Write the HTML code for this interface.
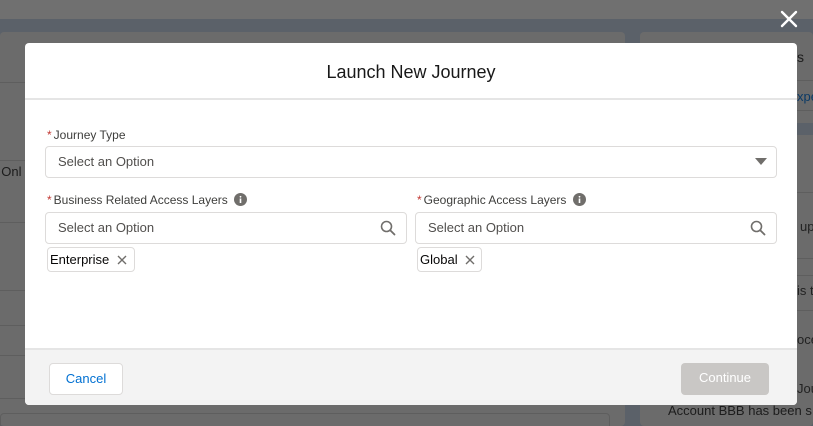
<!DOCTYPE html>
<html style="overflow:hidden;width:813px;height:426px"><head><meta charset="utf-8"><style>
*{box-sizing:border-box;margin:0;padding:0}
body{width:813px;height:426px;overflow:hidden;position:relative;background:#5b6169;font-family:"Liberation Sans",sans-serif}
.abs{position:absolute;white-space:nowrap}
.line{position:absolute;height:1px;background:#5e5e5e}
.modal{position:absolute;left:25px;top:43px;width:772px;height:362px;background:#fff;border-radius:4px;overflow:hidden}
.hdr{height:57px;border-bottom:2px solid #e5e5e5;text-align:center;font-size:18px;line-height:58px;color:#181818}
.lbl{position:absolute;font-size:12px;color:#3e3e3c;white-space:nowrap}
.lbl b{color:#c23934;font-weight:normal;margin-right:2px}
.inp{position:absolute;height:32px;border:1px solid #dddbda;border-radius:4px;font-size:13px;color:#514f4d;line-height:30px;padding-left:12px}
.pill{position:absolute;height:25px;border:1px solid #dddbda;border-radius:4px;font-size:13px;color:#080707;line-height:23px;padding-left:2px}
.ftr{position:absolute;left:0;top:305px;width:772px;height:57px;background:#f3f3f3;border-top:2px solid #e5e5e5}
.btn{position:absolute;top:13px;height:32px;border-radius:4px;font-size:13px;line-height:30px;text-align:center}
</style></head><body>
<div class="abs" style="left:0;top:0;width:813px;height:19px;background:#707070"></div>
<div class="abs" style="left:0;top:32px;width:625px;height:394px;background:#6b6b6b;border-radius:4px"></div>
<div class="abs" style="left:640px;top:32px;width:173px;height:394px;background:#6b6b6b;border-radius:4px"></div>
<div class="abs" style="left:640px;top:123px;width:173px;height:12px;background:#5b6169"></div>
<div class="line" style="left:0;top:82px;width:25px"></div>
<div class="line" style="left:0;top:160px;width:25px"></div>
<div class="line" style="left:0;top:222px;width:25px"></div>
<div class="line" style="left:0;top:290px;width:25px"></div>
<div class="line" style="left:0;top:325px;width:25px"></div>
<div class="line" style="left:0;top:355px;width:25px"></div>
<div class="line" style="left:0;top:398px;width:25px"></div>
<div class="abs" style="left:-6px;top:164px;font-size:13px;color:#1c1c1c">: Onl</div>
<div class="abs" style="left:0;top:413px;width:610px;height:20px;border:1px solid #5e5e5e;border-radius:4px"></div>
<div class="line" style="left:797px;top:80px;width:16px"></div>
<div class="line" style="left:797px;top:110px;width:16px"></div>
<div class="line" style="left:797px;top:192px;width:16px"></div>
<div class="line" style="left:797px;top:258px;width:16px"></div>
<div class="line" style="left:797px;top:275px;width:16px"></div>
<div class="line" style="left:797px;top:310px;width:16px"></div>
<div class="abs" style="left:797px;top:49px;font-size:14px;color:#1c1c1c">s</div>
<div class="abs" style="left:797px;top:89px;font-size:13px;color:#0b3a66">xpe</div>
<div class="abs" style="left:800px;top:219px;font-size:13px;color:#222">up</div>
<div class="abs" style="left:797px;top:283px;font-size:13px;color:#222">is t</div>
<div class="abs" style="left:797px;top:332px;font-size:13px;color:#222">oce</div>
<div class="abs" style="left:797px;top:381px;font-size:13px;color:#222">Jou</div>
<div class="abs" style="left:668px;top:403px;font-size:13px;color:#1c1c1c">Account BBB has been s</div>
<svg class="abs" style="left:780px;top:10px" width="18" height="18" viewBox="0 0 18 18"><path d="M2 2L16 16M16 2L2 16" stroke="#fff" stroke-width="2.4" stroke-linecap="round"/></svg>
<div class="modal">
<div class="hdr">Launch New Journey</div>
<div class="lbl" style="left:22px;top:85px"><b>*</b>Journey Type</div>
<div class="inp" style="left:20px;top:103px;width:732px">Select an Option</div>
<svg class="abs" style="left:730px;top:115px" width="12" height="8"><path d="M0 0H12L6 7Z" fill="#706e6b"/></svg>
<div class="lbl" style="left:22px;top:150px"><b>*</b>Business Related Access Layers <svg width="13" height="13" style="vertical-align:-2px;margin-left:3px" viewBox="0 0 13 13"><circle cx="6.5" cy="6.5" r="6.5" fill="#706e6b"/><rect x="5.7" y="5.5" width="1.6" height="4.5" fill="#fff"/><circle cx="6.5" cy="3.8" r="0.9" fill="#fff"/></svg></div>
<div class="inp" style="left:20px;top:169px;width:362px">Select an Option</div>
<svg class="abs" style="left:355px;top:177px" width="16" height="16" viewBox="0 0 16 16"><circle cx="6.5" cy="6.5" r="5" fill="none" stroke="#706e6b" stroke-width="1.6"/><path d="M10.2 10.2L14.5 14.5" stroke="#706e6b" stroke-width="1.8" stroke-linecap="round"/></svg>
<div class="pill" style="left:22px;top:204px;width:88px">Enterprise <svg width="10" height="10" style="margin-left:4px;vertical-align:-1px"><path d="M1 1L9 9M9 1L1 9" stroke="#706e6b" stroke-width="1.4"/></svg></div>
<div class="lbl" style="left:392px;top:150px"><b>*</b>Geographic Access Layers <svg width="13" height="13" style="vertical-align:-2px;margin-left:3px" viewBox="0 0 13 13"><circle cx="6.5" cy="6.5" r="6.5" fill="#706e6b"/><rect x="5.7" y="5.5" width="1.6" height="4.5" fill="#fff"/><circle cx="6.5" cy="3.8" r="0.9" fill="#fff"/></svg></div>
<div class="inp" style="left:390px;top:169px;width:362px">Select an Option</div>
<svg class="abs" style="left:725px;top:177px" width="16" height="16" viewBox="0 0 16 16"><circle cx="6.5" cy="6.5" r="5" fill="none" stroke="#706e6b" stroke-width="1.6"/><path d="M10.2 10.2L14.5 14.5" stroke="#706e6b" stroke-width="1.8" stroke-linecap="round"/></svg>
<div class="pill" style="left:392px;top:204px;width:65px">Global <svg width="10" height="10" style="margin-left:4px;vertical-align:-1px"><path d="M1 1L9 9M9 1L1 9" stroke="#706e6b" stroke-width="1.4"/></svg></div>
<div class="ftr">
<div class="btn" style="left:24px;width:74px;background:#fff;border:1px solid #dddbda;color:#0070d2">Cancel</div>
<div class="btn" style="left:656px;width:88px;background:#c9c7c5;color:#fff">Continue</div>
</div>
</div>
</body></html>
